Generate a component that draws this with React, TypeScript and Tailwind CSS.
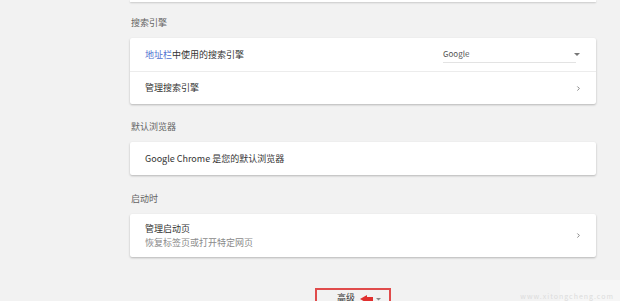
import { ChevronRight } from "lucide-react";

const font = { fontFamily: '"Noto Sans CJK SC", "Noto Sans", Roboto, sans-serif' };

function SectionLabel({ text, h }: { text: string; h: string }) {
  return <div className={`${h} flex items-end pb-[9px] text-[9px] leading-[12px] text-[#646464] pl-[1px]`}>{text}</div>;
}

function Card({ children }: { children: React.ReactNode }) {
  return (
    <div className="bg-white rounded-[2px] shadow-[0_1px_2px_rgba(0,0,0,0.18),0_1px_3px_rgba(0,0,0,0.08)]">
      {children}
    </div>
  );
}

export default function App() {
  return (
    <div className="w-[620px] h-[301px] overflow-hidden bg-[#f2f2f2] relative" style={font}>
      <div className="flex">
        <div className="w-[130px] shrink-0" />
        <div className="w-[466px] flex flex-col">
          {/* end of the card above */}
          <div className="h-[2px] bg-white shadow-[0_1px_2px_rgba(0,0,0,0.18)]" />

          <SectionLabel text="搜索引擎" h="h-[36px]" />
          <Card>
            <div className="h-[33px] flex items-center px-[15px] text-[9px] text-[#333]">
              <span className="flex-1">
                <span className="text-[#4f6fd0]">地址栏</span>中使用的搜索引擎
              </span>
              <div className="w-[133px] mr-[5px] h-[17px] flex items-center justify-between border-b border-[#e3e3e3]">
                <span className="text-[8px] text-[#555]">Google</span>
                <svg width="8" height="5" viewBox="0 0 8 5" className="relative left-[5px]">
                  <path d="M1 1 L4 4 L7 1 Z" fill="#777" />
                </svg>
              </div>
            </div>
            <div className="h-[33px] flex items-center px-[15px] text-[9px] text-[#333] border-t border-[#ececec]">
              <span className="flex-1">管理搜索引擎</span>
              <ChevronRight size={7} strokeWidth={3} className="text-[#777] mr-[-1px]" />
            </div>
          </Card>

          <SectionLabel text="默认浏览器" h="h-[38px]" />
          <Card>
            <div className="h-[33px] flex items-center px-[15px] text-[9px] text-[#333]">
              Google Chrome 是您的默认浏览器
            </div>
          </Card>

          <SectionLabel text="启动时" h="h-[39px]" />
          <Card>
            <div className="h-[43px] flex items-center px-[15px]">
              <div className="flex-1 flex flex-col leading-[14px]">
                <span className="text-[9px] text-[#333]">管理启动页</span>
                <span className="text-[9px] text-[#8a8a8a]">恢复标签页或打开特定网页</span>
              </div>
              <ChevronRight size={7} strokeWidth={3} className="text-[#777] mr-[-1px]" />
            </div>
          </Card>

          <div className="h-[31px]" />
          <div className="flex pl-[185px]">
            <div className="w-[76px] h-[20px] border-[2px] border-[#e04b4b] flex items-start pt-[3px] pl-[20px] gap-[4px]">
              <span className="text-[9px] text-[#333] leading-[10px]">高级</span>
              <svg width="22" height="10" viewBox="0 0 22 10">
                <path d="M1 6 L8 2 L8 4 L14 4 L14 9 L8 9 L8 10 Z" fill="#e0302f" />
                <path d="M17 5 L19.5 7.5 L22 5 Z" fill="#888" />
              </svg>
            </div>
          </div>
        </div>
      </div>

      {/* watermark */}
      <div className="absolute right-0 top-[280px] w-[60px] h-[21px] bg-[#f6f6f6]" />
      <div className="absolute right-[6px] bottom-[0px] text-[7px] text-[#dcdcdc] tracking-[1px]">
        www.xitongcheng.com
      </div>
    </div>
  );
}
